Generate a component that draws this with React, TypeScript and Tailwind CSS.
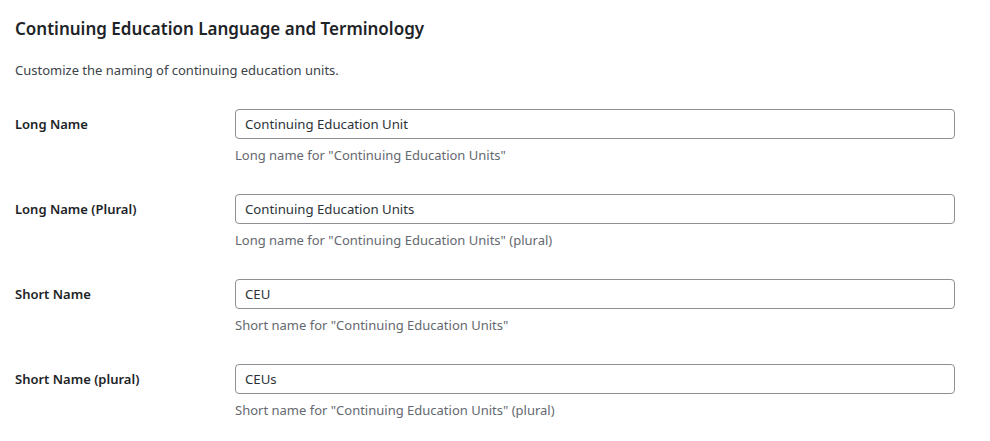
import React from "react";

const rows = [
  { label: "Long Name", value: "Continuing Education Unit", desc: 'Long name for "Continuing Education Units"' },
  { label: "Long Name (Plural)", value: "Continuing Education Units", desc: 'Long name for "Continuing Education Units" (plural)' },
  { label: "Short Name", value: "CEU", desc: 'Short name for "Continuing Education Units"' },
  { label: "Short Name (plural)", value: "CEUs", desc: 'Short name for "Continuing Education Units" (plural)' },
];

export default function App() {
  return (
    <div className="w-[990px] h-[441px] bg-white px-[15px] text-[13px] text-[#3c434a] font-['Noto_Sans',sans-serif] overflow-hidden">
      <h2 className="pt-[17px] text-[17px] leading-[24px] font-semibold text-[#1d2327]">
        Continuing Education Language and Terminology
      </h2>
      <p className="mt-[19px] leading-[20px]">Customize the naming of continuing education units.</p>
      <div className="mt-[14px] flex flex-col">
        {rows.map((r) => (
          <div key={r.label} className="flex h-[85px]">
            <div className="w-[210px] pt-[20px] pr-[10px] leading-[20px] font-semibold text-[#1d2327] text-[13px]">
              {r.label}
            </div>
            <div className="pl-[10px] pt-[15px] flex flex-col">
              <input
                readOnly
                value={r.value}
                className="w-[720px] h-[30px] border border-[#8c8f94] rounded-[4px] px-[9px] text-[13.2px] text-[#2c3338] outline-none font-['Noto_Sans',sans-serif]"
              />
              <p className="mt-[6px] leading-[20px] text-[#646970]">{r.desc}</p>
            </div>
          </div>
        ))}
      </div>
    </div>
  );
}
